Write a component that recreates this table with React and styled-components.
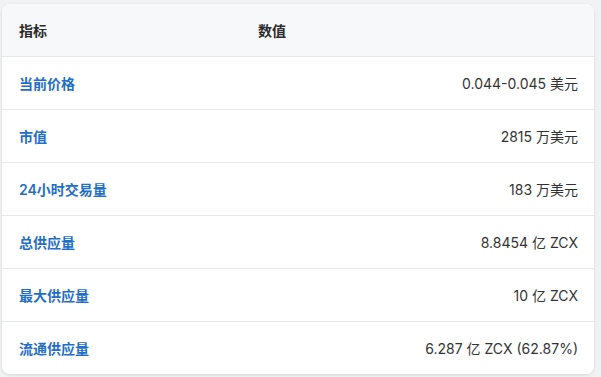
import React from 'react';
import styled, { createGlobalStyle } from 'styled-components';

const GlobalStyle = createGlobalStyle`
  html, body {
    margin: 0;
    padding: 0;
    background: #f1f2f4;
    font-family: Inter, "Noto Sans CJK SC", sans-serif;
  }
`;

const Page = styled.div`
  padding: 4px 7px 4px 2px;
`;

const Card = styled.div`
  background: #ffffff;
  border-radius: 8px;
  overflow: hidden;
  box-shadow: 0 1px 3px rgba(0, 0, 0, 0.12);
`;

const Row = styled.div`
  display: grid;
  grid-template-columns: 239px 1fr;
  align-items: center;
  height: 52px;
  padding: 0 16px 0 17px;
  background: ${props => (props.head ? '#f7f8fa' : '#ffffff')};
  border-bottom: ${props => (props.last ? 'none' : '1px solid #e6e7ea')};
  font-size: 14px;
`;

const HeadCell = styled.div`
  font-weight: 600;
  color: #2b2b2b;
`;

const Label = styled.div`
  font-weight: 600;
  color: #1f6fc5;
`;

const Value = styled.div`
  text-align: right;
  color: #333333;
`;

const rows = [
  ['当前价格', '0.044-0.045 美元'],
  ['市值', '2815 万美元'],
  ['24小时交易量', '183 万美元'],
  ['总供应量', '8.8454 亿 ZCX'],
  ['最大供应量', '10 亿 ZCX'],
  ['流通供应量', '6.287 亿 ZCX (62.87%)'],
];

function App() {
  return (
    <Page>
      <GlobalStyle />
      <Card>
        <Row head>
          <HeadCell>指标</HeadCell>
          <HeadCell>数值</HeadCell>
        </Row>
        {rows.map(([label, value], i) => (
          <Row key={label} last={i === rows.length - 1}>
            <Label>{label}</Label>
            <Value>{value}</Value>
          </Row>
        ))}
      </Card>
    </Page>
  );
}

export default App;
